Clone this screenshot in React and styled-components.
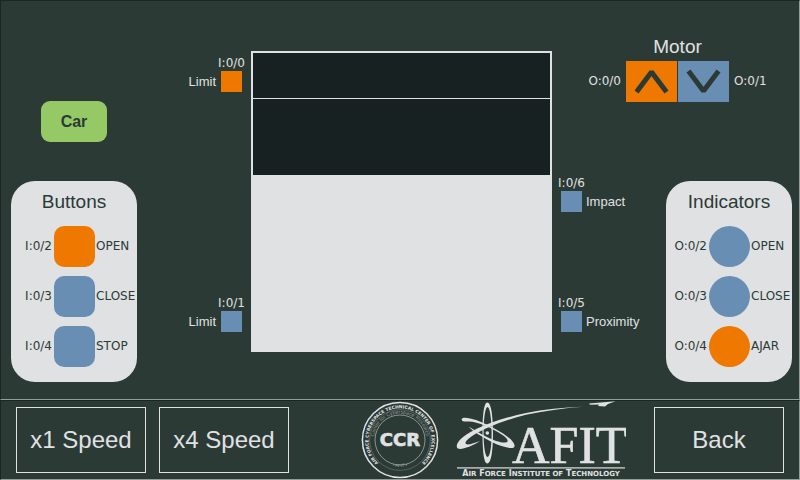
import React from "react";
import styled, { createGlobalStyle } from "styled-components";

const c = {
  bg: "#2b3a35",
  dark: "#172121",
  shadow: "#1b2522",
  edge: "#959c9a",
  light: "#e0e1e3",
  blue: "#698eb4",
  orange: "#ee7800",
  green: "#95c966",
};
const sans = '"Liberation Sans", Arial, sans-serif';
const address = '"DejaVu Sans", Verdana, sans-serif';

const GlobalStyle = createGlobalStyle`
  * { box-sizing: border-box; }
  body { margin: 0; background: ${c.bg}; color: ${c.light}; font-family: ${sans}; }
  button { margin: 0; padding: 0; font-family: inherit; cursor: pointer; }
`;

const Page = styled.div`
  display: flex;
  flex-direction: column;
  min-height: 100vh;
`;

const Board = styled.main`
  flex: 1;
  display: grid;
  grid-template-columns: 231fr 301fr 231fr;
  column-gap: 9px;
  align-items: start;
  padding: 35px 7px 17px 10px;
  border: 1px solid;
  border-color: ${c.shadow} ${c.edge} ${c.edge} ${c.shadow};
`;

const LeftSide = styled.div`
  display: flex;
  justify-content: space-between;
`;

const Controls = styled.div`
  display: flex;
  flex-direction: column;
  align-items: center;
  gap: 39px;
  padding-top: 65px;
`;

const CarButton = styled.button`
  width: 66px;
  height: 41px;
  border: 0;
  border-radius: 9px;
  background: ${c.green};
  color: ${c.bg};
  font-size: 16px;
  font-weight: bold;
`;

const Sensors = styled.div`
  display: flex;
  flex-direction: column;
  gap: ${(p) => p.$gap}px;
  padding-top: ${(p) => p.$top}px;
`;

const SensorBox = styled.div`
  display: grid;
  grid-template-columns: ${(p) => (p.$flip ? "21px auto" : "auto 21px")};
  grid-template-rows: 16px 21px;
  column-gap: ${(p) => (p.$flip ? 4 : 5)}px;
  justify-content: start;
  align-items: center;
`;

const SensorAddress = styled.span`
  grid-row: 1;
  grid-column: ${(p) => (p.$flip ? 1 : 2)};
  justify-self: center;
  white-space: nowrap;
  font: 12px/16px ${address};
`;

const SensorName = styled.span`
  grid-row: 2;
  grid-column: ${(p) => (p.$flip ? 2 : 1)};
  font-size: 13px;
  line-height: 21px;
`;

const SensorLight = styled.span`
  grid-row: 2;
  grid-column: ${(p) => (p.$flip ? 1 : 2)};
  height: 21px;
  background: ${(p) => (p.$on ? c.orange : c.blue)};
`;

const Door = styled.div`
  display: flex;
  flex-direction: column;
  height: 301px;
  margin-top: 15px;
  border: 2px solid ${c.light};
  background: ${c.light};
`;

const Opening = styled.div`
  height: 122px;
  padding-top: 45px;
  background: ${c.dark};
`;

const DoorLine = styled.div`
  height: 1px;
  background: ${c.light};
`;

const RightSide = styled.div`
  display: flex;
  flex-direction: column;
`;

const Motor = styled.section`
  display: flex;
  flex-direction: column;
  align-items: center;
  padding-left: 2px;
`;

const MotorTitle = styled.h2`
  margin: 0;
  font-size: 19px;
  font-weight: normal;
  line-height: 22px;
  padding-bottom: 3px;
`;

const MotorRow = styled.div`
  display: flex;
  align-items: center;
  gap: 5px;
  font: 12px/16px ${address};
`;

const MotorAddress = styled.span`
  padding-bottom: 2px;
`;

const MotorButtons = styled.div`
  display: flex;
  gap: 1px;
`;

const MotorButton = styled.button`
  display: flex;
  width: 51px;
  height: 41px;
  border: 0;
  background: ${(p) => (p.$on ? c.orange : c.blue)};
`;

const RightLower = styled.div`
  display: flex;
  justify-content: space-between;
  align-items: flex-start;
  padding-top: 73px;
`;

const PanelCard = styled.section`
  display: flex;
  flex-direction: column;
  gap: 9px;
  width: 126px;
  padding-bottom: 15px;
  border-radius: 24px;
  background: ${c.light};
  color: ${c.bg};
  margin-top: ${(p) => p.$top || 0}px;
`;

const PanelTitle = styled.h2`
  margin: 0;
  padding-top: 10px;
  height: 36px;
  font-size: 19px;
  font-weight: normal;
  line-height: 22px;
  text-align: center;
`;

const PanelRow = styled.div`
  display: grid;
  grid-template-columns: 42fr 41px 41fr;
  column-gap: 1px;
  align-items: center;
  font: 12px/16px ${address};
`;

const RowAddress = styled.span`
  padding: 0 1px 2px 0;
  text-align: right;
  white-space: nowrap;
`;

const RowName = styled.span`
  padding-bottom: 2px;
`;

const PushButton = styled.button`
  height: 41px;
  border: 0;
  border-radius: 10px;
  background: ${(p) => (p.$on ? c.orange : c.blue)};
`;

const Lamp = styled.span`
  height: 41px;
  border-radius: 50%;
  background: ${(p) => (p.$on ? c.orange : c.blue)};
`;

const Footer = styled.footer`
  display: flex;
  align-items: center;
  gap: 13px;
  height: 80px;
  padding: 0 15px;
  border: 1px solid;
  border-color: ${c.shadow} ${c.edge} ${c.edge} ${c.shadow};
`;

const FooterButton = styled.button`
  width: 130px;
  height: 66px;
  border: 1px solid ${c.light};
  background: transparent;
  color: ${c.light};
  font-size: 24px;
`;

const Logos = styled.div`
  display: flex;
  align-items: center;
  gap: 17px;
  margin-left: auto;
  margin-right: 15px;
`;

function Sensor({ name, addr, on, flip }) {
  return (
    <SensorBox $flip={flip}>
      <SensorAddress $flip={flip}>{addr}</SensorAddress>
      <SensorName $flip={flip}>{name}</SensorName>
      <SensorLight $flip={flip} $on={on} />
    </SensorBox>
  );
}

function Chevron({ down }) {
  return (
    <svg width="51" height="41" viewBox="0 0 51 41" aria-hidden="true">
      <path
        d={down ? "M10.5 10 25.5 30 40.5 10" : "M10.5 31 25.5 11 40.5 31"}
        fill="none"
        stroke={c.bg}
        strokeWidth="5"
        strokeLinejoin="bevel"
      />
    </svg>
  );
}

function CcrLogo() {
  return (
    <svg width="78" height="78" viewBox="0 0 78 78" role="img" aria-label="Center for Cyberspace Research">
      <defs>
        <path id="ring-outer" d="M18.7 63.2 A31.6 31.6 0 1 1 59.3 63.2" />
        <path id="ring-inner" d="M13 42 A26.2 26.2 0 1 1 65 42" />
        <path id="ring-bottom" d="M15 53 A28.5 28.5 0 0 0 63 53" />
      </defs>
      <circle cx="39" cy="39" r="37.6" fill="none" stroke={c.light} strokeWidth="1.5" />
      <circle cx="39" cy="39" r="30.4" fill="none" stroke="#68736f" strokeWidth="0.7" />
      <circle cx="39" cy="39" r="25" fill="none" stroke="#a4aaa8" strokeWidth="0.8" />
      <text fill={c.light} fontFamily="DejaVu Sans" fontWeight="bold" fontSize="4.4">
        <textPath href="#ring-outer" startOffset="50%" textAnchor="middle">
          AIR FORCE CYBERSPACE TECHNICAL CENTER OF EXCELLENCE
        </textPath>
      </text>
      <text fill="#8b9491" fontFamily="Liberation Sans" fontSize="5.2">
        <textPath href="#ring-inner" startOffset="50%" textAnchor="middle">
          Center for Cyberspace Research
        </textPath>
      </text>
      <text fill="#a4aaa8" fontFamily="Liberation Sans" fontSize="4.5">
        <textPath href="#ring-bottom" startOffset="50%" textAnchor="middle">
          • AFIT •
        </textPath>
      </text>
      <text
        x="39"
        y="45"
        textAnchor="middle"
        fill={c.light}
        stroke={c.light}
        strokeWidth="0.7"
        fontFamily="DejaVu Sans"
        fontWeight="bold"
        fontSize="18"
      >
        CCR
      </text>
    </svg>
  );
}

function AfitLogo() {
  return (
    <svg width="170" height="78" viewBox="0 0 170 78" role="img" aria-label="AFIT Air Force Institute of Technology">
      <g fill={c.light}>
        <path
          fillRule="evenodd"
          d="M31.3 1.5C35 1.5 37 14 37 32C37 51 35 62.5 31.3 62.5C28 62.5 26.5 51 26.5 32C26.5 14 28 1.5 31.3 1.5ZM31.5 6C29.5 6 27.6 16 27.6 32C27.6 47 29.5 56 31.5 56C33.8 56 35.6 47 35.6 32C35.6 16 33.5 6 31.5 6Z"
        />
        <path d="M13 20.500C9 20.500 6 21 5.600 18.500C5.500 15.500 13 16.500 20 19C36 25 60 38 58.500 45.500C57 50 39 44 26 35.500C20 32 15 28.500 12.500 25.500C19 29.500 24 32.500 29 35C40 41 50 43 51.500 40.500C53 37 43 31 30 25C23 22 17 20.500 13 20.500Z" />
        <path d="M.8 46C0 34 36 19 70 12Q97 6.500 127 5.700Q97 8 70 13.800C38 21.500 12 35 9.500 41.500C9 45.500 17 42.500 24 40C14 46.500 1.500 50.500 .8 46Z" />
        <circle cx="31.3" cy="32" r="1.8" />
        <path d="M133 2.500 159.500.3 152 3 149 5.500 142 5 143 3.500 134 3.800Z" />
        <text x="56" y="62" stroke={c.light} strokeWidth="0.6" fontFamily="Liberation Serif" fontSize="52">
          AFIT
        </text>
        <path d="M1 66h168v1.700H1z" fill="#a7adab" />
        <text x="85" y="75" textAnchor="middle" fontFamily="DejaVu Sans" fontWeight="bold" fontSize="8">
          A<tspan fontSize="7">IR</tspan> F<tspan fontSize="7">ORCE</tspan> I<tspan fontSize="7">NSTITUTE OF</tspan>{" "}
          T<tspan fontSize="7">ECHNOLOGY</tspan>
        </text>
      </g>
    </svg>
  );
}

const buttons = [
  { addr: "I:0/2", name: "OPEN", on: true },
  { addr: "I:0/3", name: "CLOSE" },
  { addr: "I:0/4", name: "STOP" },
];
const indicators = [
  { addr: "O:0/2", name: "OPEN" },
  { addr: "O:0/3", name: "CLOSE" },
  { addr: "O:0/4", name: "AJAR", on: true },
];

export default function App() {
  return (
    <Page>
      <GlobalStyle />
      <Board>
        <LeftSide>
          <Controls>
            <CarButton>Car</CarButton>
            <PanelCard>
              <PanelTitle>Buttons</PanelTitle>
              {buttons.map((b) => (
                <PanelRow key={b.name}>
                  <RowAddress>{b.addr}</RowAddress>
                  <PushButton $on={b.on} aria-labelledby={`push-${b.name}`} />
                  <RowName id={`push-${b.name}`}>{b.name}</RowName>
                </PanelRow>
              ))}
            </PanelCard>
          </Controls>
          <Sensors $gap={203} $top={19}>
            <Sensor name="Limit" addr="I:0/0" on />
            <Sensor name="Limit" addr="I:0/1" />
          </Sensors>
        </LeftSide>
        <Door>
          <Opening>
            <DoorLine />
          </Opening>
        </Door>
        <RightSide>
          <Motor>
            <MotorTitle>Motor</MotorTitle>
            <MotorRow>
              <MotorAddress>O:0/0</MotorAddress>
              <MotorButtons>
                <MotorButton $on aria-label="Motor up">
                  <Chevron />
                </MotorButton>
                <MotorButton aria-label="Motor down">
                  <Chevron down />
                </MotorButton>
              </MotorButtons>
              <MotorAddress>O:0/1</MotorAddress>
            </MotorRow>
          </Motor>
          <RightLower>
            <Sensors $gap={83} $top={0}>
              <Sensor name="Impact" addr="I:0/6" flip />
              <Sensor name="Proximity" addr="I:0/5" flip />
            </Sensors>
            <PanelCard $top={6}>
              <PanelTitle>Indicators</PanelTitle>
              {indicators.map((b) => (
                <PanelRow key={b.name}>
                  <RowAddress>{b.addr}</RowAddress>
                  <Lamp $on={b.on} />
                  <RowName>{b.name}</RowName>
                </PanelRow>
              ))}
            </PanelCard>
          </RightLower>
        </RightSide>
      </Board>
      <Footer>
        <FooterButton>x1 Speed</FooterButton>
        <FooterButton>x4 Speed</FooterButton>
        <Logos>
          <CcrLogo />
          <AfitLogo />
        </Logos>
        <FooterButton>Back</FooterButton>
      </Footer>
    </Page>
  );
}
